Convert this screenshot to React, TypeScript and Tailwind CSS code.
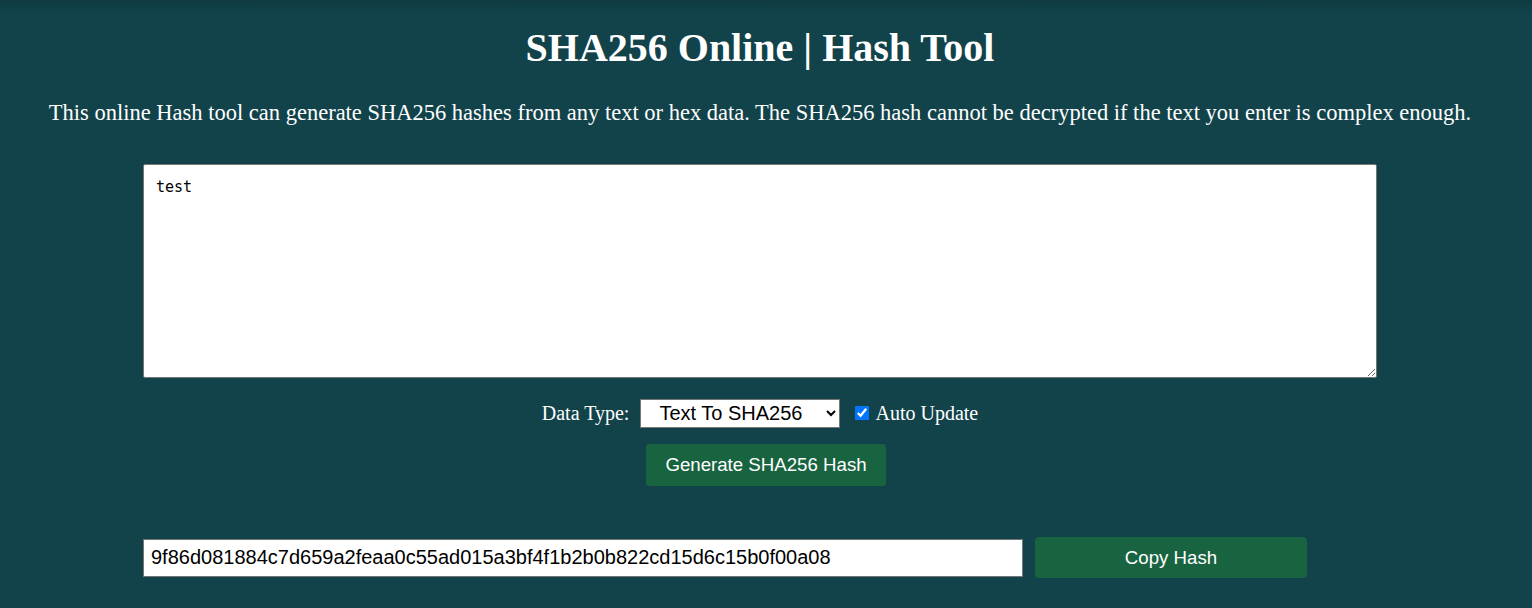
import React, { useState } from 'react';

const serif = { fontFamily: '"Liberation Serif", "Times New Roman", serif' };
const sans = { fontFamily: '"Liberation Sans", Arial, sans-serif' };

export default function App() {
  const [text, setText] = useState('test');
  const [auto, setAuto] = useState(true);

  return (
    <div className="min-h-[608px] w-full bg-[#12434b] text-white" style={serif}>
      <div className="h-[14px] w-full bg-gradient-to-b from-[#103a42] to-[#12434b]" />
      <div className="w-[1520px] flex flex-col items-center">
        <h1 className="text-[40px] font-bold leading-[46px] mt-[11px]">SHA256 Online | Hash Tool</h1>
        <p className="text-[22.5px] leading-[26px] mt-[29px]">
          This online Hash tool can generate SHA256 hashes from any text or hex data. The SHA256 hash cannot be decrypted if the text you enter is complex enough.
        </p>

        <textarea
          value={text}
          onChange={(e) => setText(e.target.value)}
          className="mt-[38px] w-[1234px] h-[214px] bg-white text-black border border-[#767676] rounded-[2px] px-[12px] py-[13px] text-[15px] leading-[18px] outline-none"
          style={{ fontFamily: '"DejaVu Sans Mono", monospace' }}
        />

        <div className="flex items-center mt-[19px] h-[32px]">
          <span className="text-[20px] mr-[11px]">Data Type:</span>
          <select
            className="w-[200px] h-[29px] bg-white text-black border border-[#767676] text-[20px] pl-[14px] pr-[4px]"
            style={sans}
            defaultValue="text"
          >
            <option value="text">Text To SHA256</option>
            <option value="hex">Hex To SHA256</option>
          </select>
          <label className="flex items-center ml-[15px] text-[20px]">
            <input
              type="checkbox"
              checked={auto}
              onChange={(e) => setAuto(e.target.checked)}
              className="w-[14px] h-[14px] mr-[6px] accent-[#0075ff]"
            />
            Auto Update
          </label>
        </div>

        <button
          className="mt-[15px] ml-[12px] w-[240px] h-[42px] bg-[#186340] rounded-[3px] text-[18.67px] text-white"
          style={sans}
        >
          Generate SHA256 Hash
        </button>

        <div className="self-start ml-[143px] mt-[51px] flex items-center gap-[12px]">
          <input
            readOnly
            value="9f86d081884c7d659a2feaa0c55ad015a3bf4f1b2b0b822cd15d6c15b0f00a08"
            className="w-[880px] h-[38px] bg-white text-black border border-[#767676] px-[7px] text-[20px] outline-none"
            style={sans}
          />
          <button
            className="w-[272px] h-[41px] bg-[#186340] rounded-[4px] text-[18.67px] text-white"
            style={sans}
          >
            Copy Hash
          </button>
        </div>
      </div>
    </div>
  );
}
